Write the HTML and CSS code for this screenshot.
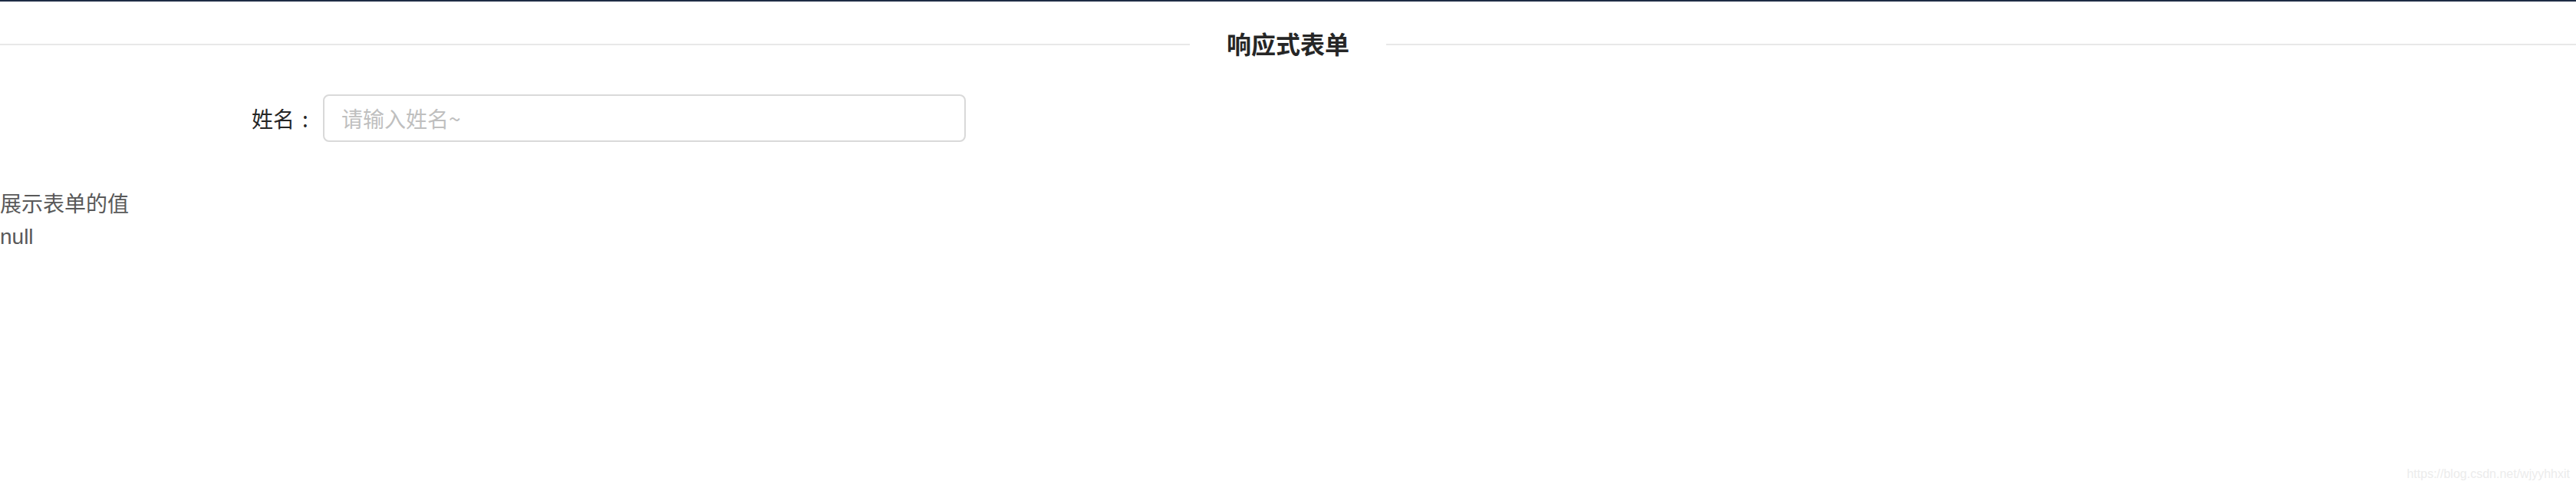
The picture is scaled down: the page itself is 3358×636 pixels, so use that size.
FILE: index.html
```html
<!DOCTYPE html>
<html lang="zh-CN">
<head>
<meta charset="utf-8">
<title>响应式表单</title>
<link rel="stylesheet" href="styles.css">
</head>
<body>
<div class="topbar"></div>
<div class="divider"><span class="divider-text">响应式表单</span></div>
<form class="form-row">
  <label class="form-label" for="name">姓名<span class="colon">:</span></label>
  <input class="form-input" id="name" type="text" placeholder="请输入姓名~">
</form>
<div class="output">
  <div class="output-line">展示表单的值</div>
  <div class="output-line">null</div>
</div>
<div class="watermark">https://blog.csdn.net/wjyyhhxit</div>
</body>
</html>
```

FILE: styles.css
```css
html, body {
  margin: 0;
  padding: 0;
  background: #ffffff;
}
body {
  font-family: "Liberation Sans", "Noto Sans CJK SC", sans-serif;
  font-size: 28px;
  color: #595959;
  height: 636px;
  overflow: hidden;
  position: relative;
}
.topbar {
  height: 2px;
  background: #1e2c45;
}
.divider {
  display: flex;
  align-items: center;
  margin-top: 32px;
  height: 48px;
}
.divider::before,
.divider::after {
  content: "";
  flex: 1;
  border-top: 2px solid #e8e8e8;
}
.divider-text {
  padding: 0 48px 4px 48px;
  font-family: "Noto Sans CJK SC", sans-serif;
  font-size: 32px;
  font-weight: 700;
  line-height: 44px;
  color: #262626;
}
.form-row {
  display: flex;
  align-items: center;
  margin: 41px 0 0 0;
  height: 62px;
}
.form-label {
  width: 412px;
  text-align: right;
  font-family: "Noto Sans CJK SC", sans-serif;
  font-size: 28px;
  color: #262626;
  white-space: nowrap;
}
.colon {
  display: inline-block;
  width: 28px;
  text-align: center;
}
.form-input {
  margin-left: 9px;
  width: 838px;
  height: 62px;
  box-sizing: border-box;
  border: 2px solid #d9d9d9;
  border-radius: 8px;
  padding: 0 22px;
  font-family: "Noto Sans CJK SC", sans-serif;
  font-size: 28px;
  color: #262626;
  background: #ffffff;
  outline: none;
}
.form-input::placeholder {
  color: #bfbfbf;
}
.output {
  margin-top: 61px;
}
.output-line {
  font-size: 28px;
  line-height: 42px;
  color: #595959;
}
.watermark {
  position: absolute;
  right: 8px;
  bottom: 10px;
  font-family: "Liberation Sans", sans-serif;
  font-size: 16px;
  line-height: 16px;
  color: #ececec;
}
```
